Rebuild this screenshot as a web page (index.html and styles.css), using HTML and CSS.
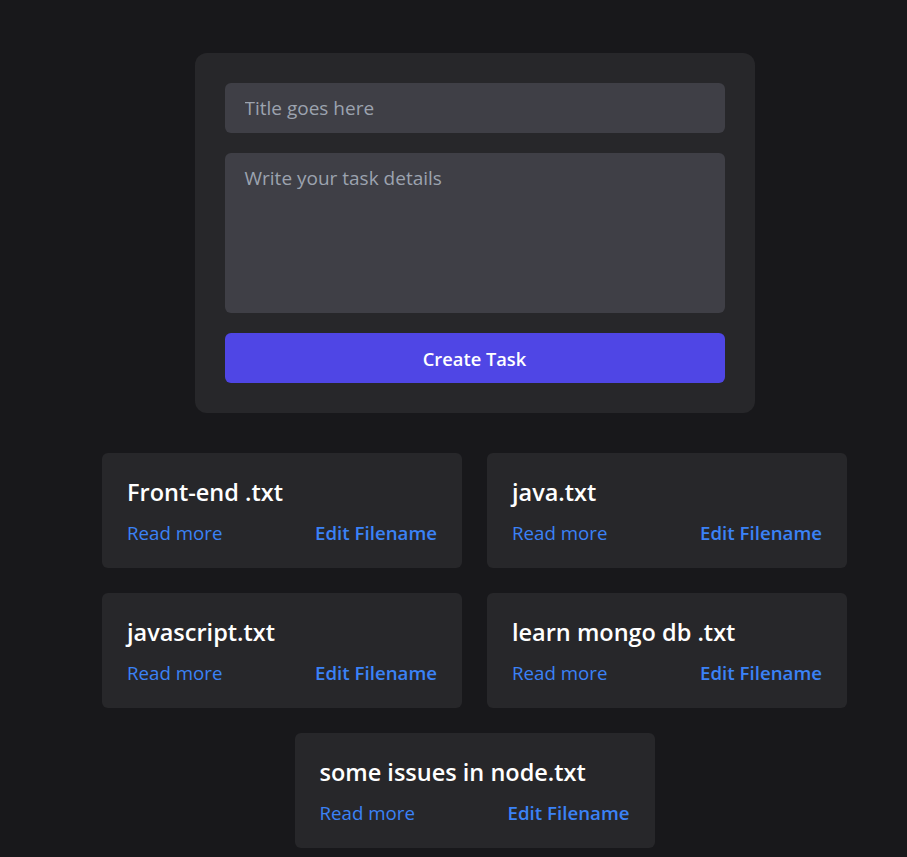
FILE: index.html
```html
<!DOCTYPE html>
<html>
<head>
<meta charset="utf-8">
<link rel="stylesheet" href="styles.css">
</head>
<body>
<main class="page">
  <form class="task-form">
    <input class="field" type="text" placeholder="Title goes here">
    <textarea class="field area" placeholder="Write your task details"></textarea>
    <button class="btn" type="button">Create Task</button>
  </form>
  <section class="tasks">
    <div class="card"><h2 class="card-title">Front-end .txt</h2><div class="card-links"><a class="read">Read more</a><a class="edit">Edit Filename</a></div></div>
    <div class="card"><h2 class="card-title">java.txt</h2><div class="card-links"><a class="read">Read more</a><a class="edit">Edit Filename</a></div></div>
    <div class="card"><h2 class="card-title">javascript.txt</h2><div class="card-links"><a class="read">Read more</a><a class="edit">Edit Filename</a></div></div>
    <div class="card"><h2 class="card-title">learn mongo db .txt</h2><div class="card-links"><a class="read">Read more</a><a class="edit">Edit Filename</a></div></div>
    <div class="card"><h2 class="card-title">some issues in node.txt</h2><div class="card-links"><a class="read">Read more</a><a class="edit">Edit Filename</a></div></div>
  </section>
</main>
</body>
</html>
```
FILE: styles.css
```css
* { box-sizing: border-box; }
html, body { margin: 0; background: #18181b; }
body { font-family: "Open Sans", "Noto Sans", sans-serif; color: #fff; }
.page {
  padding: 53px 0 0 42px;
  display: flex;
  flex-direction: column;
  align-items: center;
  gap: 40px;
}
.task-form {
  width: 560px;
  background: #27272a;
  border-radius: 12px;
  padding: 30px;
  display: flex;
  flex-direction: column;
  gap: 20px;
}
.field {
  display: block;
  width: 100%;
  height: 50px;
  background: #3f3f46;
  border: none;
  border-radius: 6px;
  padding: 0 20px;
  font-family: inherit;
  font-size: 19px;
  color: #fff;
  outline: none;
}
.field::placeholder { color: #9ca3af; }
.area { height: 160px; padding-top: 12px; resize: none; }
.btn {
  height: 50px;
  border: none;
  border-radius: 6px;
  background: #4f46e5;
  color: #fff;
  font-family: inherit;
  font-size: 18.3px;
  font-weight: 600;
}
.tasks {
  display: flex;
  flex-wrap: wrap;
  justify-content: center;
  gap: 25px;
  width: 100%;
}
.card {
  width: 360px;
  height: 115px;
  background: #27272a;
  border-radius: 6px;
  padding: 24px 25px 0;
}
.card-title {
  margin: 0;
  font-size: 23.5px;
  font-weight: 600;
  line-height: 30px;
  color: #fff;
}
.card-links {
  display: flex;
  justify-content: space-between;
  margin-top: 13px;
  font-size: 18.7px;
  line-height: 26px;
}
.read { color: #3b82f6; }
.edit { color: #3b82f6; font-weight: 600; }
```
